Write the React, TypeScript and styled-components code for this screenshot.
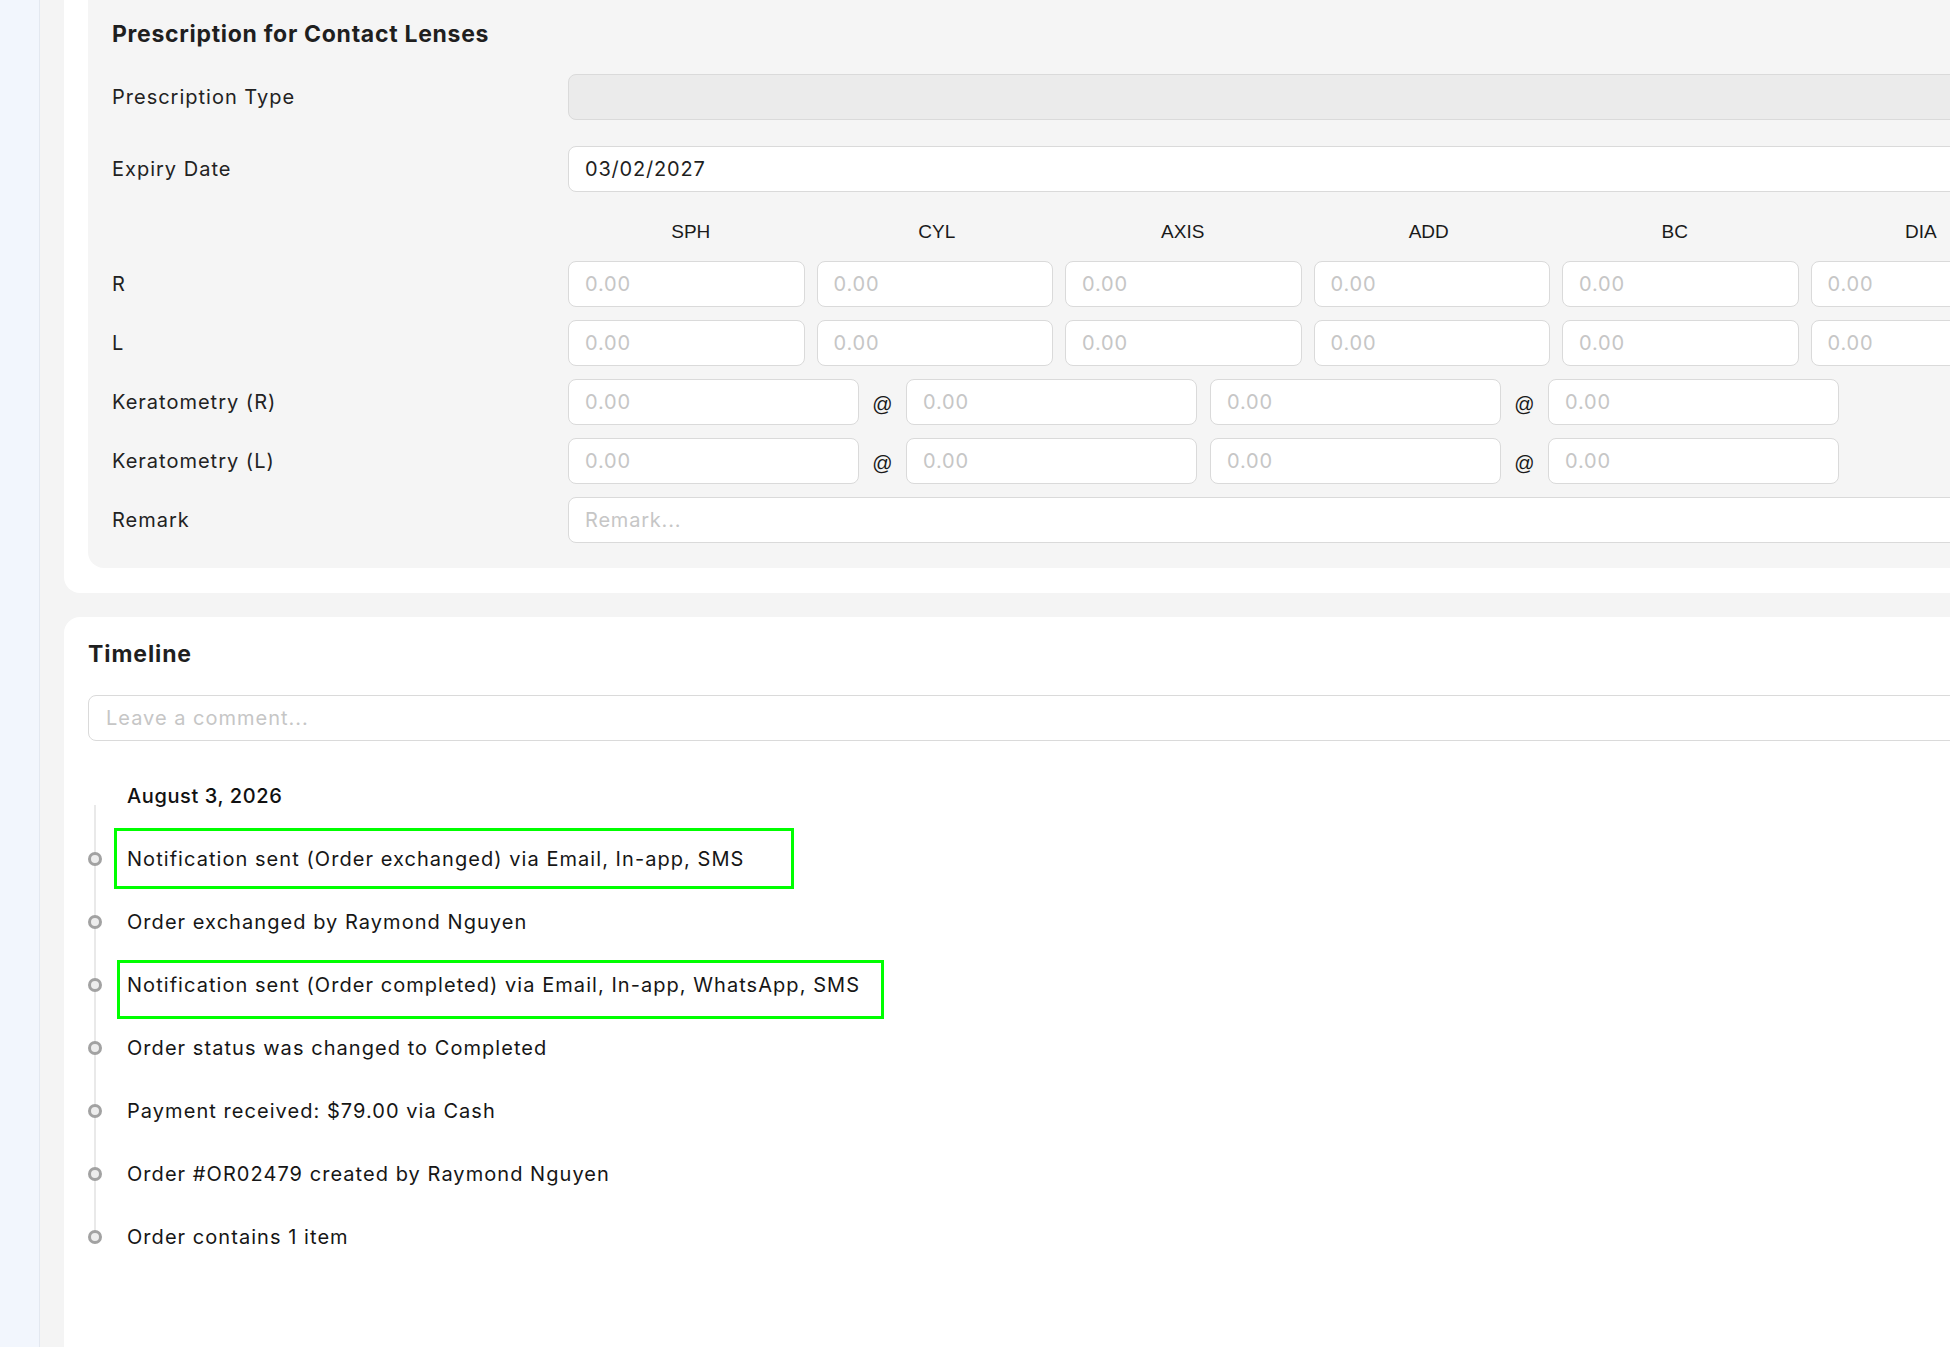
import styled, { createGlobalStyle } from 'styled-components'

const GlobalStyle = createGlobalStyle`
  html, body {
    margin: 0;
    padding: 0;
  }
  body {
    background: #f4f4f4;
    font-family: Inter, "Noto Sans", sans-serif;
    color: #1b1b1b;
    overflow: hidden;
  }
  * {
    box-sizing: border-box;
  }
`

const Layout = styled.div`
  display: flex;
  width: 2120px;
  height: 1347px;
  overflow: hidden;
`

const Sidebar = styled.aside`
  width: 40px;
  flex: none;
  background: #f2f6fd;
  border-right: 1px solid #e3e8f0;
`

const Main = styled.main`
  flex: 1;
  display: flex;
  flex-direction: column;
  gap: 24px;
  padding-left: 24px;
`

const Card = styled.section<{ $cutTop?: boolean }>`
  background: #fff;
  border-radius: ${p => (p.$cutTop ? '0 0 16px 16px' : '16px 16px 0 0')};
  padding: ${p => (p.$cutTop ? '0 24px 25px' : '24px 24px 0')};
  flex: ${p => (p.$cutTop ? 'none' : '1')};
`

const Panel = styled.div`
  background: #f5f5f5;
  border-radius: 0 0 16px 16px;
  padding: 18px 24px 25px;
  display: flex;
  flex-direction: column;
  gap: 13px;
`

const PanelTitle = styled.h2`
  margin: 0 0 11px;
  font-size: 23px;
  line-height: 32px;
  font-weight: 700;
  letter-spacing: 0.7px;
  color: #1f1f1f;
`

const FormRow = styled.div<{ $spaced?: boolean }>`
  display: flex;
  align-items: center;
  height: 46px;
  margin-bottom: ${p => (p.$spaced ? '13px' : '0')};
`

const Label = styled.div`
  width: 456px;
  flex: none;
  font-size: 20px;
  letter-spacing: 1px;
  color: #222;
`

const Fields = styled.div<{ $gap?: number }>`
  display: flex;
  align-items: center;
  gap: ${p => p.$gap ?? 12}px;
  flex: 1;
`

const Input = styled.input<{ $w?: number; $muted?: boolean }>`
  height: 46px;
  width: ${p => (p.$w ? `${p.$w}px` : '100%')};
  flex: ${p => (p.$w ? 'none' : '1')};
  border: 1px solid #dadada;
  border-radius: 8px;
  background: ${p => (p.$muted ? '#ebebeb' : '#fff')};
  padding: 0 16px;
  font-family: Inter, "Noto Sans", sans-serif;
  font-size: 20px;
  letter-spacing: 0.8px;
  color: #1f1f1f;
  outline: none;

  &::placeholder {
    color: #c6c6c6;
  }
`

const HeaderRow = styled.div`
  display: flex;
  align-items: flex-end;
  height: 43px;
  padding: 0 0 3px 462px;
  gap: 12.5px;
`

const HeaderCell = styled.div`
  width: 233.5px;
  flex: none;
  text-align: center;
  font-family: "Liberation Sans", Arial, sans-serif;
  font-size: 19px;
  line-height: 26px;
  color: #1a1a1a;
`

const At = styled.span`
  width: 47px;
  flex: none;
  text-align: center;
  font-family: "Liberation Sans", Arial, sans-serif;
  font-size: 20px;
  color: #1a1a1a;
  padding-top: 4px;
`

const KGroup = styled.div`
  display: flex;
  align-items: center;
`

const CardTitle = styled.h2`
  margin: 0 0 28px;
  font-size: 23px;
  line-height: 26px;
  font-weight: 700;
  letter-spacing: 0.9px;
  color: #1f1f1f;
`

const CommentInput = styled(Input)`
  padding-left: 17px;
  letter-spacing: 1px;
`

const Group = styled.div`
  position: relative;
  margin-top: 40px;

  &::before {
    content: '';
    position: absolute;
    left: 6px;
    top: 24px;
    bottom: 25px;
    width: 2px;
    background: #e9e9e9;
  }
`

const DateHeading = styled.div`
  padding-left: 39px;
  font-size: 20px;
  line-height: 30px;
  font-weight: 500;
  letter-spacing: 0.6px;
  color: #111;
  margin-bottom: 16px;
`

const Item = styled.div`
  position: relative;
  display: flex;
  align-items: center;
  height: 63px;
`

const Bullet = styled.span`
  position: relative;
  width: 14px;
  height: 14px;
  flex: none;
  border-radius: 50%;
  border: 3.5px solid #a2a2a2;
  background: #ededed;
`

const ItemText = styled.span`
  margin-left: 25px;
  font-size: 20px;
  letter-spacing: 1.05px;
  color: #161616;
`

const Highlight = styled.span<{ $l: number; $t: number; $w: number; $h: number }>`
  position: absolute;
  left: ${p => p.$l}px;
  top: ${p => p.$t}px;
  width: ${p => p.$w}px;
  height: ${p => p.$h}px;
  border: 3px solid #00ff00;
  pointer-events: none;
`

const columns = ['SPH', 'CYL', 'AXIS', 'ADD', 'BC', 'DIA']

type Box = { l: number; t: number; w: number; h: number }

const events: { text: string; box?: Box }[] = [
  { text: 'Notification sent (Order exchanged) via Email, In-app, SMS', box: { l: 26, t: 1, w: 680, h: 61 } },
  { text: 'Order exchanged by Raymond Nguyen' },
  { text: 'Notification sent (Order completed) via Email, In-app, WhatsApp, SMS', box: { l: 29, t: 7, w: 767, h: 59 } },
  { text: 'Order status was changed to Completed' },
  { text: 'Payment received: $79.00 via Cash' },
  { text: 'Order #OR02479 created by Raymond Nguyen' },
  { text: 'Order contains 1 item' },
]

const EyeRow = ({ label }: { label: string }) => (
  <FormRow>
    <Label>{label}</Label>
    <Fields>
      {columns.map(c => (
        <Input key={c} $w={236.5} placeholder="0.00" readOnly />
      ))}
    </Fields>
  </FormRow>
)

const KeratometryRow = ({ label }: { label: string }) => (
  <FormRow>
    <Label>{label}</Label>
    <Fields $gap={13}>
      {[0, 1].map(g => (
        <KGroup key={g}>
          <Input $w={291} placeholder="0.00" readOnly />
          <At>@</At>
          <Input $w={291} placeholder="0.00" readOnly />
        </KGroup>
      ))}
    </Fields>
  </FormRow>
)

export default function App() {
  return (
    <>
      <GlobalStyle />
      <Layout>
        <Sidebar />
        <Main>
          <Card $cutTop>
            <Panel>
              <PanelTitle>Prescription for Contact Lenses</PanelTitle>
              <FormRow $spaced>
                <Label>Prescription Type</Label>
                <Input $muted readOnly />
              </FormRow>
              <FormRow>
                <Label>Expiry Date</Label>
                <Input defaultValue="03/02/2027" readOnly />
              </FormRow>
              <HeaderRow>
                {columns.map(c => (
                  <HeaderCell key={c}>{c}</HeaderCell>
                ))}
              </HeaderRow>
              <EyeRow label="R" />
              <EyeRow label="L" />
              <KeratometryRow label="Keratometry (R)" />
              <KeratometryRow label="Keratometry (L)" />
              <FormRow>
                <Label>Remark</Label>
                <Input placeholder="Remark..." readOnly />
              </FormRow>
            </Panel>
          </Card>
          <Card>
            <CardTitle>Timeline</CardTitle>
            <CommentInput placeholder="Leave a comment..." readOnly />
            <Group>
              <DateHeading>August 3, 2026</DateHeading>
              {events.map(e => (
                <Item key={e.text}>
                  <Bullet />
                  <ItemText>{e.text}</ItemText>
                  {e.box && <Highlight $l={e.box.l} $t={e.box.t} $w={e.box.w} $h={e.box.h} />}
                </Item>
              ))}
            </Group>
          </Card>
        </Main>
      </Layout>
    </>
  )
}
